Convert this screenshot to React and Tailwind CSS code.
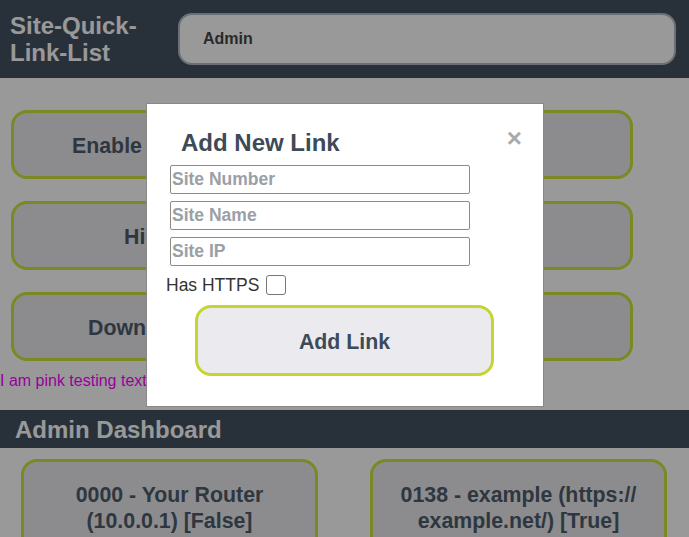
export default function App() {
  const font = { fontFamily: '"Liberation Sans", Arial, sans-serif' };
  return (
    <div className="relative w-[689px] h-[537px] overflow-hidden bg-white" style={font}>
      {/* Header */}
      <div className="h-[78px] bg-[#445262] flex items-center pl-[10px] pr-[13px] gap-[20px]">
        <div className="w-[148px] text-white font-bold text-[24px] leading-[27px]">Site-Quick-Link-List</div>
        <div className="flex-1 h-[52px] rounded-[14px] border-2 border-[#b2bbc8] bg-white flex items-center pl-[23px] text-[#464646] font-bold text-[16px]">
          Admin
        </div>
      </div>

      {/* Body */}
      <div className="pt-[32px] flex flex-col gap-[22px]">
        <div className="ml-[11px] w-[622px] h-[69px] rounded-[16px] border-[3px] border-[#cde33b] bg-[#e9e9ed] flex items-center pt-[5px] pl-[58px] text-[#4e5c6b] font-bold text-[21.33px]">
          Enable Edit Mode
        </div>
        <div className="ml-[11px] w-[622px] h-[69px] rounded-[16px] border-[3px] border-[#cde33b] bg-[#e9e9ed] flex items-center pt-[5px] pl-[110px] text-[#4e5c6b] font-bold text-[21.33px]">
          Hide Links
        </div>
        <div className="ml-[11px] w-[622px] h-[69px] rounded-[16px] border-[3px] border-[#cde33b] bg-[#e9e9ed] flex items-center pt-[5px] pl-[74px] text-[#4e5c6b] font-bold text-[21.33px]">
          Download Links
        </div>
      </div>
      <div className="mt-[10px] text-[#ff00ff] text-[16px] leading-[20px]">I am pink testing text</div>

      <div className="mt-[19px] h-[38px] bg-[#445262] flex items-center pl-[15px] pt-[1px] text-white font-bold text-[24px]">
        Admin Dashboard
      </div>
      <div className="pt-[11px] pl-[21px] flex gap-[52px]">
        <div className="w-[297px] h-[120px] rounded-[16px] border-[3px] border-[#cde33b] bg-[#e9e9ed] pt-[20px] px-[16px] text-center text-[#4e5c6b] font-bold text-[21.33px] leading-[26px]">
          0000 - Your Router (10.0.0.1) [False]
        </div>
        <div className="w-[297px] h-[120px] rounded-[16px] border-[3px] border-[#cde33b] bg-[#e9e9ed] pt-[20px] px-[16px] text-center text-[#4e5c6b] font-bold text-[21.33px] leading-[26px]">
          0138 - example (https://<wbr />example.net/) [True]
        </div>
      </div>

      {/* Overlay */}
      <div className="absolute inset-0 bg-black/40"></div>

      {/* Modal */}
      <div className="absolute top-[103px] left-[146px] w-[398px] h-[304px] bg-white border border-[#888] pl-[19px] pr-[20px] pt-[25px]">
        <div className="flex items-start justify-between">
          <div className="ml-[15px] text-[24px] leading-[28px] font-bold text-[#3d4a57]">Add New Link</div>
          <div className="text-[#aaaaaa] text-[26px] font-bold leading-[26px] mr-[1px] -mt-[4px]">×</div>
        </div>
        <div className="mt-[8px] ml-[4px] flex flex-col gap-[7px]">
          <input className="w-[300px] h-[29px] border border-[#8a8a8a] rounded-[2px] px-[1px] text-[17.5px] font-bold placeholder:text-[#9aa0a6] outline-none" placeholder="Site Number" style={font} />
          <input className="w-[300px] h-[29px] border border-[#8a8a8a] rounded-[2px] px-[1px] text-[17.5px] font-bold placeholder:text-[#9aa0a6] outline-none" placeholder="Site Name" style={font} />
          <input className="w-[300px] h-[29px] border border-[#8a8a8a] rounded-[2px] px-[1px] text-[17.5px] font-bold placeholder:text-[#9aa0a6] outline-none" placeholder="Site IP" style={font} />
        </div>
        <div className="mt-[6px] flex items-center gap-[7px] text-[#333] text-[17.5px]">
          <span>Has HTTPS</span>
          <span className="w-[20px] h-[20px] border border-[#767676] rounded-[3px] bg-white"></span>
        </div>
        <div className="mt-[7px] ml-[29px] w-[299px] h-[71px] rounded-[16px] border-[3px] border-[#c5d42e] bg-[#ebebef] flex items-center justify-center pt-[4px] text-[#3d4a57] font-bold text-[21.33px]">
          Add Link
        </div>
      </div>
    </div>
  );
}
